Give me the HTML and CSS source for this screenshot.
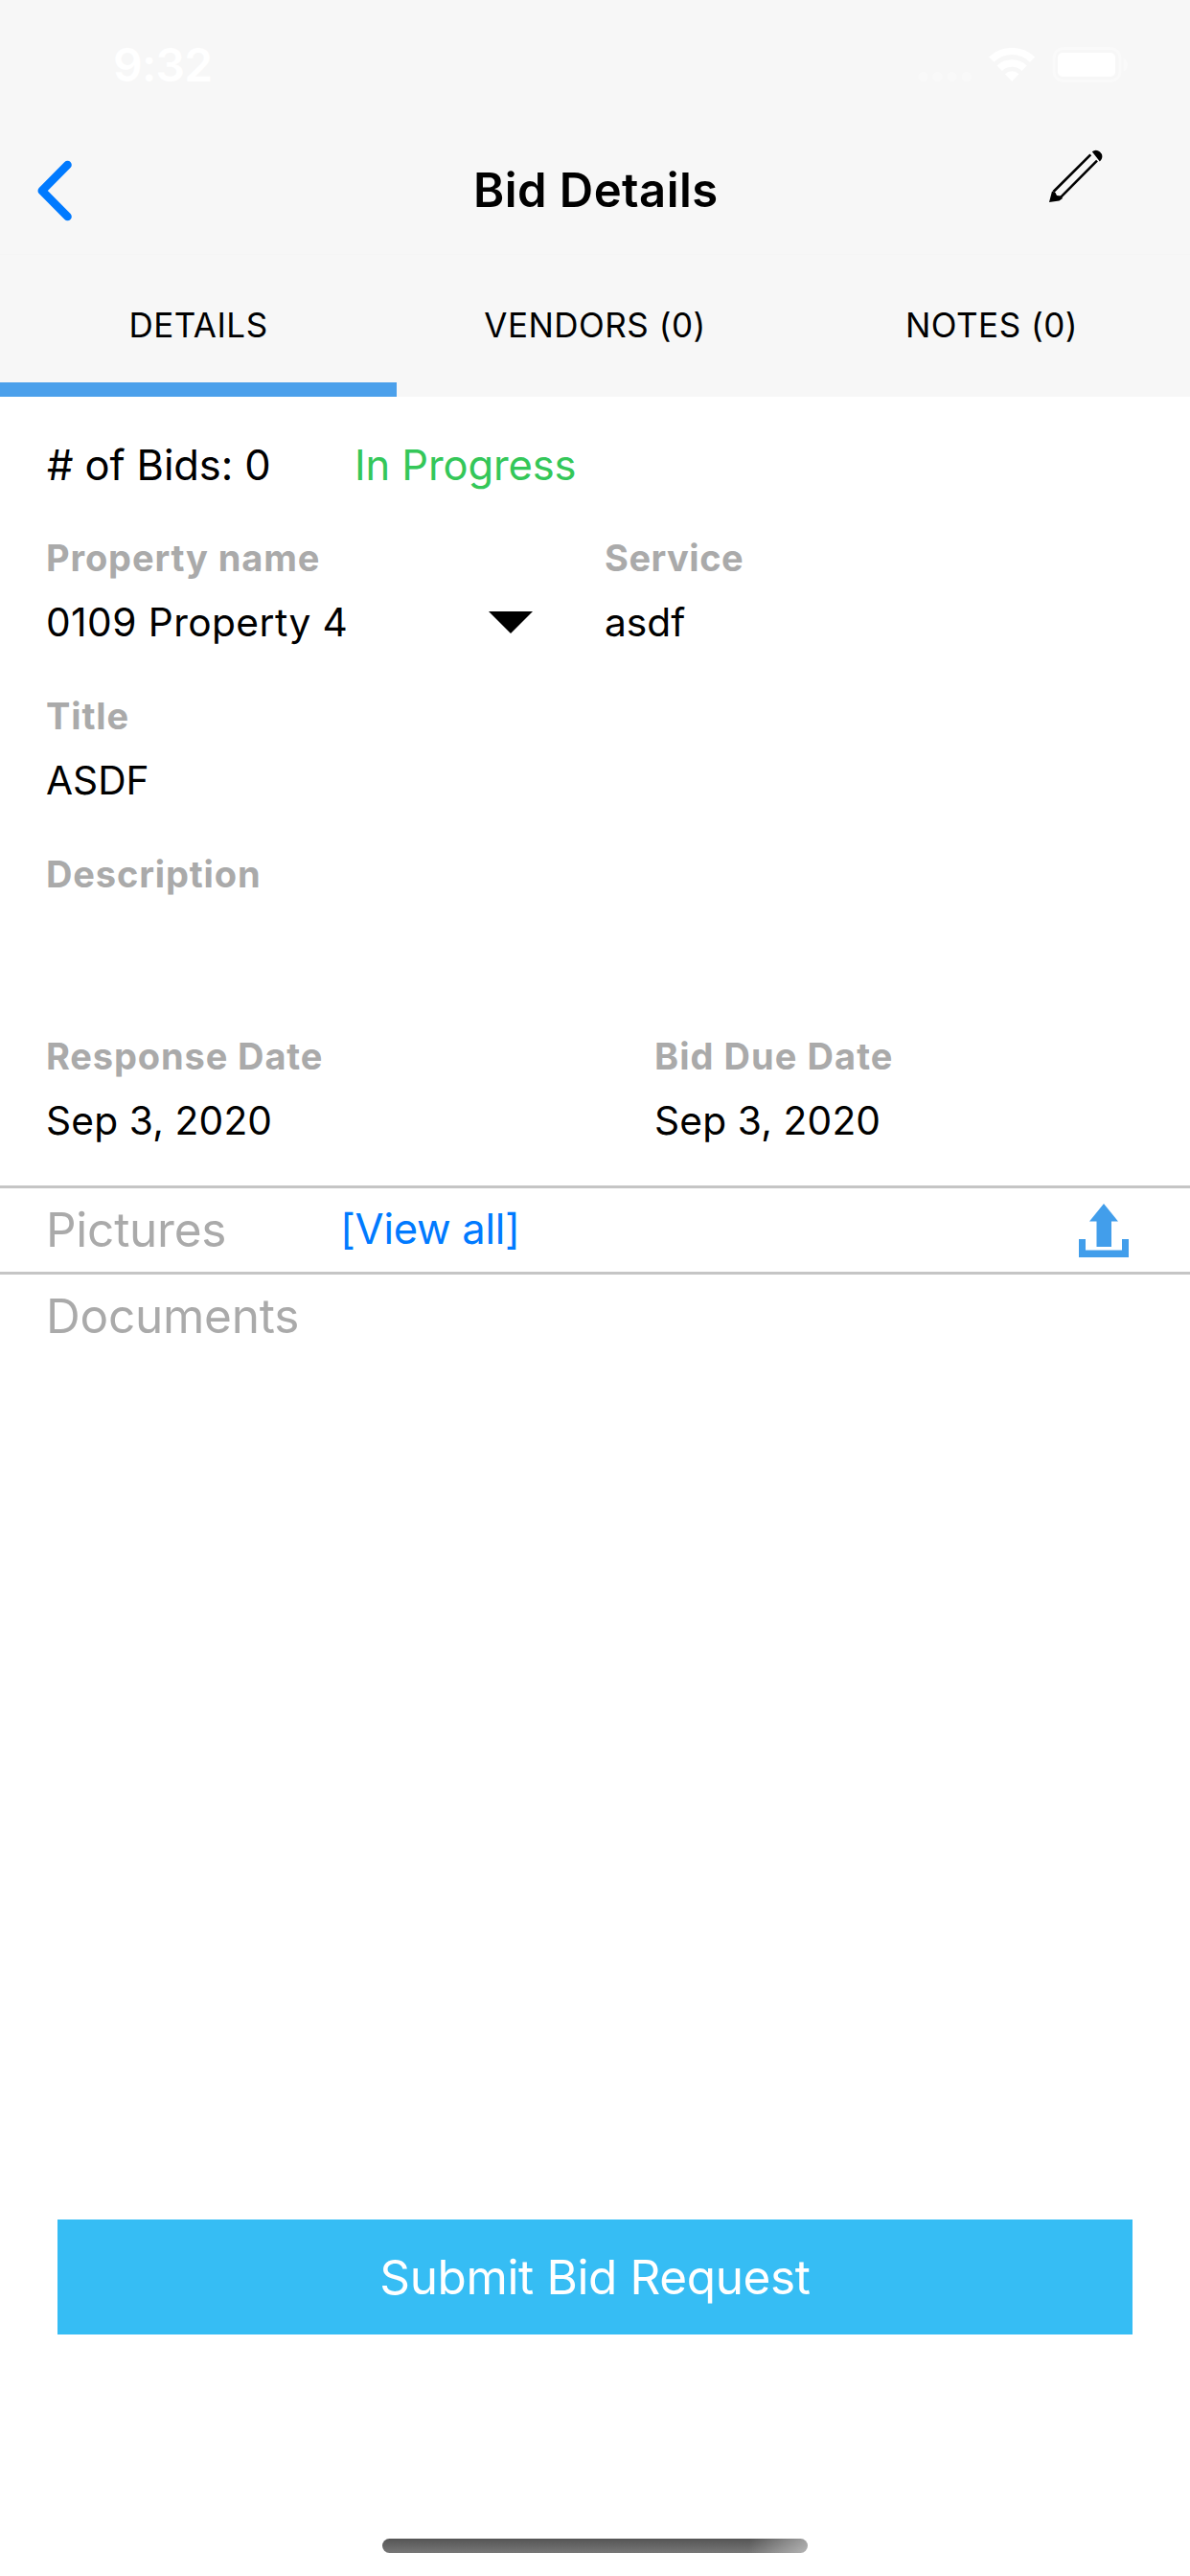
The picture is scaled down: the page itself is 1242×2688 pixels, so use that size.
FILE: index.html
```html
<!DOCTYPE html>
<html lang="en">
<head>
<meta charset="utf-8">
<title>Bid Details</title>
<link rel="stylesheet" href="styles.css">
</head>
<body>
<div class="screen">
  <header class="header">
    <div class="status-bar">
      <span class="time">9:32</span>
      <svg class="status-icons" width="220" height="40" viewBox="0 0 220 40" fill="#fff">
        <g opacity=".3"><circle cx="5.500" cy="32" r="5.300"/><circle cx="20.500" cy="32" r="5.300"/><circle cx="35.500" cy="32" r="5.300"/><circle cx="50.800" cy="32" r="5.300"/></g>
        <path d="M74 11.500a34.500 34.500 0 0 1 48.300 0l-5.300 5.200a27 27 0 0 0-37.700 0zM82.500 20.500a22.500 22.500 0 0 1 31.300 0l-5.400 5.400a15 15 0 0 0-20.500 0zM90.800 29.300a10.600 10.600 0 0 1 14.700 0L98.150 37z"/>
        <rect x="142" y="2.500" width="69" height="34" rx="10" fill="none" stroke="#fff" stroke-width="3" opacity=".35"/>
        <rect x="146" y="7" width="60" height="25" rx="5"/>
        <path d="M214.500 13c6 2 6 11.500 0 13.500z" opacity=".4"/>
      </svg>
    </div>
    <nav class="nav">
      <svg class="back" width="38" height="66" viewBox="0 0 38 66"><path d="M32.500 6L5.800 33l26.700 27" fill="none" stroke="#007aff" stroke-width="8.600" stroke-linecap="round" stroke-linejoin="round"/></svg>
      <h1 class="nav-title">Bid Details</h1>
      <svg class="edit" width="60" height="60" viewBox="0 0 60 60"><path d="M47.300 8.300L8.500 47M54 14.700L15.500 53.400" fill="none" stroke="#000" stroke-width="2.600"/><path d="M4 58l3-11.500 3.500 1.500 1.500 3 4 .500 2 2.500-3.500 2.500z"/><path d="M48.800 5.200a6.500 6.500 0 0 1 9.500 8.500l-1.500 1.700z"/></svg>
    </nav>
    <div class="tabs">
      <div class="tab active">DETAILS</div>
      <div class="tab">VENDORS (0)</div>
      <div class="tab">NOTES (0)</div>
    </div>
  </header>
  <main class="content">
    <div class="summary"><span class="count"># of Bids: 0</span><span class="state">In Progress</span></div>
    <div class="fields">
      <div class="row">
        <div class="field property"><div class="label">Property name</div><div class="value"><span>0109 Property 4</span><svg width="46" height="23" viewBox="0 0 46 23"><path d="M0 0h46L23 23z"/></svg></div></div>
        <div class="field service"><div class="label">Service</div><div class="value">asdf</div></div>
      </div>
      <div class="field title"><div class="label">Title</div><div class="value">ASDF</div></div>
      <div class="field description"><div class="label">Description</div><div class="value"></div></div>
      <div class="row">
        <div class="field date response"><div class="label">Response Date</div><div class="value">Sep 3, 2020</div></div>
        <div class="field date due"><div class="label">Bid Due Date</div><div class="value">Sep 3, 2020</div></div>
      </div>
    </div>
    <div class="section">
      <span class="section-name">Pictures</span>
      <a class="view-all">[View all]</a>
      <svg class="upload" width="52" height="56" viewBox="0 0 52 56" fill="#429eeb"><path d="M26 0l15 18.500h-7V45H18.500V18.500H11zM0 37h7v11.500h38V37h7v19H0z"/></svg>
    </div>
    <div class="section"><span class="section-name">Documents</span></div>
  </main>
  <footer class="footer">
    <button class="submit">Submit Bid Request</button>
    <div class="home"></div>
  </footer>
</div>
</body>
</html>
```
FILE: styles.css
```css
* { box-sizing: border-box; margin: 0; padding: 0; }
body { font-family: Inter, "Liberation Sans", sans-serif; background: #fff; color: #000; }
.screen { width: 1242px; height: 2688px; display: flex; flex-direction: column; background: #fff; }

.header { background: #f7f7f7; }
.status-bar { height: 132px; padding: 48px 64px 0 118px; display: flex; justify-content: space-between; }
.time { font-size: 48px; font-weight: 600; line-height: 40px; letter-spacing: -0.8px; color: #fff; }
.nav { height: 134px; padding: 0 91px 0 38px; display: flex; justify-content: space-between; border-bottom: 1px solid #f5f5f5; }
.back { margin: 34px 418px 0 0; }
.nav-title { flex: 1; font-size: 49px; font-weight: 600; line-height: 133px; letter-spacing: 0.45px; }
.edit { margin-top: 21px; }
.tabs { height: 148px; display: grid; grid-template-columns: repeat(3, 1fr); }
.tab { text-align: center; font-size: 35px; line-height: 147px; letter-spacing: 0.5px; }
.active { box-shadow: inset 0 -15px #4ba0eb; }

.content { flex: 1; }
.summary { display: flex; padding: 41px 49px 39px; font-size: 43.5px; line-height: 60px; letter-spacing: -0.12px; }
.count { width: 321px; }
.state { color: #34c759; }
.fields { display: flex; flex-direction: column; gap: 31px; padding: 0 48px 29px; }
.row { display: flex; }
.property { width: 583px; }
.response { width: 635px; }
.description { margin-bottom: 25px; }
.label { font-size: 38px; line-height: 56px; font-weight: 700; letter-spacing: 0.87px; color: #aaa; }
.service .label { letter-spacing: 0.5px; }
.due .label { letter-spacing: 1.05px; }
.value { display: flex; align-items: center; height: 78px; padding-top: 1px; font-size: 40.7px; line-height: 78px; }
.date .value { letter-spacing: 0.15px; }
.property .value { justify-content: space-between; padding-right: 75px; letter-spacing: 0.43px; }
.section { height: 90px; border-top: 3px solid #c5c5c5; display: flex; align-items: center; padding: 0 64px 0 48px; }
.section-name { width: 307px; padding-bottom: 2px; font-size: 49.5px; letter-spacing: -0.25px; color: #aaa; }
.view-all { padding-bottom: 4px; font-size: 43.5px; letter-spacing: -0.25px; color: #007aff; }
.upload { margin-left: auto; }

.footer { padding: 0 60px 24px; display: flex; flex-direction: column; align-items: center; gap: 213px; }
.submit { width: 1122px; height: 120px; border: 0; background: #36bdf4; color: #fff; font: 49.5px Inter, sans-serif; letter-spacing: -0.38px; }
.home { width: 444px; height: 15px; border-radius: 8px; background: linear-gradient(97deg, transparent 86%, rgba(255, 255, 255, 0.45)), linear-gradient(#555, #777); }
```
